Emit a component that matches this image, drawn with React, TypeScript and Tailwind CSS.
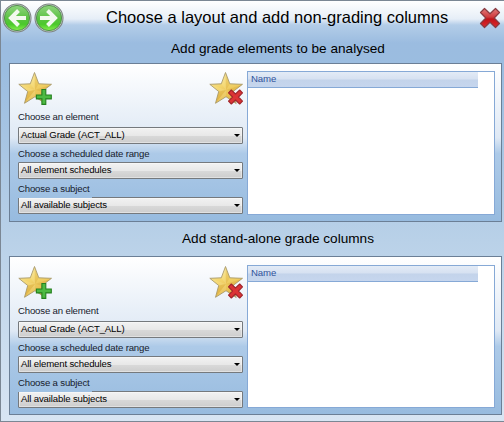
import clsx from 'clsx';

type Field = {
  label: string;
  value: string;
};

const fields: Field[] = [
  { label: 'Choose an element', value: 'Actual Grade (ACT_ALL)' },
  { label: 'Choose a scheduled date range', value: 'All element schedules' },
  { label: 'Choose a subject', value: 'All available subjects' },
];

function Gradients() {
  return (
    <svg width="0" height="0" className="absolute" aria-hidden="true">
      <defs>
        <linearGradient id="gold" x1="0" y1="0" x2="0.4" y2="1">
          <stop offset="0" stopColor="#fbeeb0" />
          <stop offset="0.5" stopColor="#f3d56c" />
          <stop offset="1" stopColor="#e3b545" />
        </linearGradient>
        <linearGradient id="red" x1="0" y1="0" x2="0" y2="1">
          <stop offset="0" stopColor="#e07a7a" />
          <stop offset="0.45" stopColor="#d03c3f" />
          <stop offset="0.55" stopColor="#bf141a" />
          <stop offset="1" stopColor="#e02a2c" />
        </linearGradient>
        <linearGradient id="green" x1="0" y1="0" x2="0" y2="1">
          <stop offset="0" stopColor="#8fd57e" />
          <stop offset="0.5" stopColor="#5cc244" />
          <stop offset="0.75" stopColor="#4bc92b" />
          <stop offset="1" stopColor="#86f04e" />
        </linearGradient>
      </defs>
    </svg>
  );
}

function NavButton({ back = false, label }: { back?: boolean; label: string }) {
  return (
    <button type="button" aria-label={label}>
      <svg width="30" height="30" viewBox="0 0 30 30" className="block">
        <circle cx="15" cy="15" r="14" fill="#cfd6d3" stroke="#7d8582" strokeWidth="1.1" />
        <circle cx="15" cy="15" r="12.6" fill="url(#green)" stroke="#55914f" strokeWidth="1" />
        <g transform={back ? undefined : 'translate(30 0) scale(-1 1)'}>
          <path
            d="M16.500 7.500 9 15l7.500 7.500M9.500 15H24"
            fill="none"
            stroke="#f2f9ef"
            strokeWidth="4"
          />
        </g>
      </svg>
    </button>
  );
}

function CloseIcon() {
  return (
    <svg width="22" height="22" viewBox="0 0 22 22" className="block">
      <path
        d="M5.500 1.500 11 6.800l5.500-5.300 4 4L15.200 11l5.300 5.500-4 4L11 15.200 5.500 20.500l-4-4L6.800 11 1.500 5.500z"
        fill="url(#red)"
        stroke="#8a3a40"
        strokeWidth="1.2"
        strokeLinejoin="round"
      />
    </svg>
  );
}

function StarIcon({ badge }: { badge: 'add' | 'remove' }) {
  return (
    <svg width="36" height="36" viewBox="0 0 36 36" className="block">
      <path
        d="M16.500 1.500 20.800 12.800l12.700.5-9.800 7.500 3.500 11.700-10.200-6.800L6.500 32.300l3.200-11.800L.8 13.300l11.500-.5z"
        fill="url(#gold)"
        stroke="#a89a6c"
        strokeWidth="0.9"
        strokeLinejoin="round"
      />
      <path d="M16.500 2.500 17 19l-4.500-5.800zM1.800 13.700 17 19l-6.900 1.300zM7 31.500 17 19v6.300z" fill="#fff6c8" opacity="0.15" />
      <path d="M16.500 2.500 17 19l3.600-5.800zM33 13.700 17 19l6.500 1.600zM7 31.500 17 19l-6.900 1.500z" fill="#c28c1a" opacity="0.18" />
      {badge === 'add' ? (
        <path
          d="M23.900 18.500h3.900v5.500h5.500v3.900h-5.500v5.500h-3.900v-5.500h-5.500V24h5.500z"
          fill="#4dba43"
          stroke="#25801f"
          strokeWidth="1.100"
        />
      ) : (
        <path
          d="m22.300 19 4.200 4 4.200-4 2.800 2.800-4 4.200 4 4.200-2.800 2.800-4.200-4-4.200 4-2.800-2.800 4-4.200-4-4.200z"
          fill="#dc3335"
          stroke="#a0262b"
          strokeWidth="1.100"
          strokeLinejoin="round"
        />
      )}
    </svg>
  );
}

function Combo({ value }: { value: string }) {
  return (
    <button
      type="button"
      className="flex h-[17px] w-full items-center justify-between rounded-[1px] border border-[#75797d] bg-[linear-gradient(to_bottom,#f2f2f2_0%,#e8e8e8_50%,#d8d8d8_56%,#cdcdcd_100%)] pr-[2px] pl-[2px] text-[9.6px] tracking-[-0.14px] text-black shadow-[inset_0_0_0_1px_rgba(255,255,255,0.4)]"
    >
      <span className="whitespace-nowrap">{value}</span>
      <svg width="6" height="3" viewBox="0 0 6 3">
        <path d="M0 0h6L3 3z" fill="#000" />
      </svg>
    </button>
  );
}

function GradePanel({ lower = false }: { lower?: boolean }) {
  return (
    <section
      className={clsx(
        'ml-2 flex h-[159px] w-[493px] border border-[#6b7f96] bg-[linear-gradient(to_bottom,#ffffff_0%,#dfe9f5_47%,#adcae8_57%,#97bbdf_100%)] pl-2',
        lower ? 'pt-2' : 'pt-[7px]'
      )}
    >
      <div className="flex w-[225px] flex-col">
        <div className="flex h-9 justify-between">
          <button type="button" aria-label="Add element">
            <StarIcon badge="add" />
          </button>
          <button type="button" aria-label="Remove element" className="-mr-[2px]">
            <StarIcon badge="remove" />
          </button>
        </div>
        <div className="mt-[2px]">
          {fields.map((field, i) => (
            <div key={field.label}>
              <div
                className={clsx(
                  'flex items-center text-[9.6px] tracking-[-0.16px] whitespace-nowrap text-[#16202c]',
                  i === 0 && 'h-[18px] pb-px',
                  i === 1 && 'h-[18px] pt-[3px]',
                  // the last label sits over the top edge of its combo
                  i === 2 && 'relative z-10 -mb-px h-[19px] w-[74px] border-b border-[#a0c1e2] pt-[3px]'
                )}
              >
                {field.label}
              </div>
              <Combo value={field.value} />
            </div>
          ))}
        </div>
      </div>
      <div className={clsx('ml-1 w-[248px] border border-[#86a9d6] bg-white', lower ? 'h-[143px]' : 'h-[144px]')}>
        <div className="flex h-4 w-[230px] items-center border-b border-[#86a9d6] bg-[linear-gradient(to_bottom,#e3ebf6_0%,#d6e1f1_48%,#c3d3ea_52%,#c6d6ee_100%)] pl-[3px] text-[9.6px] tracking-[-0.1px] text-[#30539c]">
          Name
        </div>
      </div>
    </section>
  );
}

export default function App() {
  return (
    <div className="h-[422px] w-[504px] overflow-hidden border-t border-b border-l border-[#7b8794] bg-[linear-gradient(to_bottom,#ffffff_0px,#e6eef7_18px,#b3cde8_24px,#9bbce0_42px,#9bbde0_70px,#b9d1e8_240px,#d8e5f3_420px)] font-['Liberation_Sans',Arial,sans-serif] text-black">
      <Gradients />
      <header className="flex h-8 items-center">
        <div className="ml-[1px] flex w-[104px] gap-[2px] pt-[1px]">
          <NavButton back label="Back" />
          <NavButton label="Next" />
        </div>
        <h1 className="flex-1 text-[16.5px] whitespace-nowrap">Choose a layout and add non-grading columns</h1>
        <button type="button" aria-label="Close" className="mr-[3px] pt-[2px]">
          <CloseIcon />
        </button>
      </header>
      <h2 className="flex h-[30px] items-center pt-[2px] pl-[170px] text-[13.6px] whitespace-nowrap">
        Add grade elements to be analysed
      </h2>
      <GradePanel />
      <h2 className="flex h-[34px] items-center pl-[181px] text-[13.6px] whitespace-nowrap">
        Add stand-alone grade columns
      </h2>
      <GradePanel lower />
    </div>
  );
}
